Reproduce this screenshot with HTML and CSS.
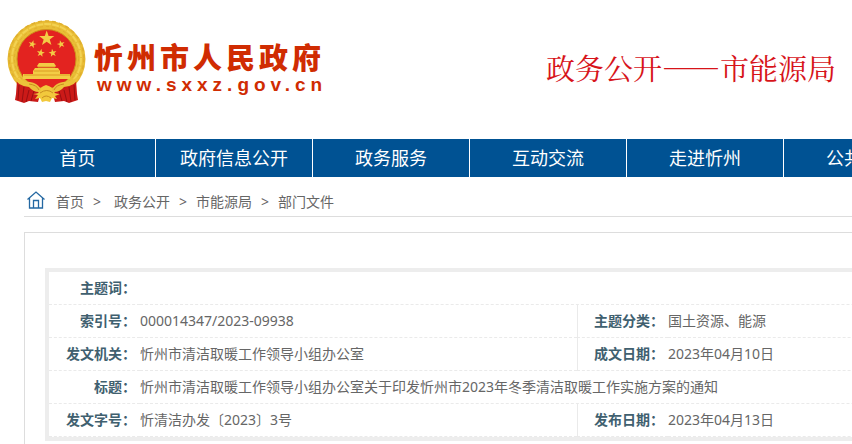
FILE: index.html
```html
<!DOCTYPE html>
<html lang="zh-CN">
  <head>
    <meta charset="utf-8" />
    <title>忻州市人民政府</title>
    <meta name="viewport" content="width=device-width, initial-scale=1" />
    <link rel="stylesheet" href="styles.css">
  </head>
  <body>
    <header class="header">
      <a class="logo" href="/">
        <svg class="emblem" viewBox="0 0 79 85" aria-hidden="true">
          <defs>
            <path id="star" d="M0-10 2.4-3.2 9.5-3.1 3.8 1.2 5.9 8.1 0 4-5.9 8.1-3.8 1.2-9.5-3.1-2.4-3.2z" />
          </defs>
          <ellipse cx="39.5" cy="39" rx="39" ry="38.5" fill="#e9bd36" />
          <circle cx="39.5" cy="38.5" r="37.5" fill="none" stroke="#dfae2c" stroke-width="1.5" stroke-dasharray="4 3" />
          <circle cx="39.5" cy="38.5" r="34.5" fill="none" stroke="#f3d252" stroke-width="2" stroke-dasharray="7 1" />
          <circle cx="39.5" cy="38.5" r="32" fill="none" stroke="#e0b02e" stroke-dasharray="3 3" />
          <circle cx="39.5" cy="39" r="29.5" fill="#e32320" stroke="#cf8f1c" />
          <g fill="#f3cc45">
            <use href="#star" transform="translate(39.7 18.5) scale(.8)" />
            <use href="#star" transform="translate(25.3 24.2) rotate(15) scale(.42)" />
            <use href="#star" transform="translate(54 24.2) rotate(-15) scale(.42)" />
            <use href="#star" transform="translate(33.7 33) rotate(10) scale(.42)" />
            <use href="#star" transform="translate(45.7 33) rotate(-10) scale(.42)" />
            <path d="M32 43h15l2 3-1 1H31l-1-1zM28 48h23l2 3H26zM26 51h27v3h10v5H16v-5h10z" />
          </g>
          <path d="M17 55h46M27 51h25M31 47h17" stroke="#dc9c24" />
          <path d="M10 60q9 6 18 6l5 9-2 7-9-1-5 2-9-3 1-6zM69 60q-9 6-18 6l-5 9 2 7 9-1 5 2 9-3-1-6z" fill="#cb1a18" />
          <path d="M12 65l-1 15M17 67l-2 15M22 70l-3 12M27 71l-3 10M67 65l1 15M62 67l2 15M57 70l3 12M52 71l3 10" stroke="#980f12" />
          <path d="M6 56q10 6 17 6 7 1 10 6l6 3 7-3q3-5 10-6 7 0 17-6-4 10-16 11-4 5-10 5l-8 2-7-2q-6 0-10-5-12-1-16-11z" fill="#ecc23a" />
          <path d="M26 74q5 0 8-3-2-4 5-6 8 2 6 6 3 3 8 3l-5 2 2 3-5-1-2 4-4-1-4 1-2-4-5 1 3-4z" fill="#f2c93c" />
          <path d="M33 73q7-5 13 0M35 78q4-4 9 0M22 64q8 1 10 6M57 64q-8 1-10 6" fill="none" stroke="#c98e20" />
        </svg>
        <span class="logo-text">
          <strong class="site-name">忻州市人民政府</strong>
          <span class="site-url">www.sxxz.gov.cn</span>
        </span>
      </a>
      <h1 class="dept">政务公开——市能源局</h1>
    </header>
    <nav class="nav">
      <ul>
        <li><a href="/">首页</a></li>
        <li><a href="/zfxxgk">政府信息公开</a></li>
        <li><a href="/zwfw">政务服务</a></li>
        <li><a href="/hdjl">互动交流</a></li>
        <li><a href="/zjxz">走进忻州</a></li>
        <li><a href="/ggfw">公共服务</a></li>
      </ul>
    </nav>
    <main class="main">
      <div class="crumbs">
        <svg class="home" viewBox="0 0 18 18" aria-hidden="true">
          <path d="M0.5 8.5 9 1l8.500 7.500M2.500 7v10h13V7M6.500 17V9.500h5V17" fill="none" stroke="#2468a2" stroke-width="1.3" />
        </svg>
        <a class="first" href="/">首页</a>
        <span>&gt;</span>
        <a class="section" href="/zwgk">政务公开</a>
        <span>&gt;</span>
        <a href="/zwgk/snyj">市能源局</a>
        <span>&gt;</span>
        <a href="/zwgk/snyj/bmwj">部门文件</a>
      </div>
      <div class="panel">
        <table class="info">
          <colgroup>
            <col class="col-label" />
            <col />
            <col class="col-label" />
            <col />
          </colgroup>
          <tr>
            <th scope="row">主题词：</th>
            <td colspan="3"></td>
          </tr>
          <tr>
            <th scope="row">索引号：</th>
            <td>000014347/2023-09938</td>
            <th scope="row" class="split">主题分类：</th>
            <td>国土资源、能源</td>
          </tr>
          <tr>
            <th scope="row">发文机关：</th>
            <td>忻州市清洁取暖工作领导小组办公室</td>
            <th scope="row" class="split">成文日期：</th>
            <td>2023年04月10日</td>
          </tr>
          <tr>
            <th scope="row">标题：</th>
            <td colspan="3">忻州市清洁取暖工作领导小组办公室关于印发忻州市2023年冬季清洁取暖工作实施方案的通知</td>
          </tr>
          <tr>
            <th scope="row">发文字号：</th>
            <td>忻清洁办发〔2023〕3号</td>
            <th scope="row" class="split">发布日期：</th>
            <td>2023年04月13日</td>
          </tr>
        </table>
      </div>
    </main>
  </body>
</html>
```

FILE: styles.css
```css
body {
  margin: 0;
  overflow: hidden;
  font-family: "Noto Sans", "Noto Sans CJK SC", sans-serif;
  font-size: 14px;
  color: #666;
  background: #fff;
}
a {
  color: inherit;
  text-decoration: none;
}
.header {
  display: flex;
  justify-content: space-between;
  align-items: center;
  padding: 20px 16px 34px 7px;
}
.logo {
  display: flex;
  align-items: center;
  gap: 8px;
  color: #d02c02;
}
.emblem {
  display: block;
  width: 79px;
  height: 85px;
}
.logo-text {
  display: flex;
  flex-direction: column;
  padding-top: 8px;
}
.site-name {
  font-family: "Noto Sans CJK SC", sans-serif;
  font-size: 29px;
  line-height: 36px;
  font-weight: 900;
  letter-spacing: 4px;
}
.site-url {
  padding-left: 3px;
  font-family: "Liberation Sans", Arial, sans-serif;
  font-size: 19px;
  line-height: 22px;
  font-weight: bold;
  letter-spacing: 5px;
}
.dept {
  margin: 0;
  padding-top: 10px;
  font-family: "Noto Serif CJK SC", "Liberation Serif", "Noto Sans CJK SC", serif;
  font-size: 29px;
  line-height: 36px;
  font-weight: normal;
  color: #d7141a;
}
.nav {
  background: #005293;
}
.nav ul {
  display: flex;
  margin: 0;
  padding: 0;
  list-style: none;
}
.nav li {
  box-sizing: border-box;
  flex: 0 0 157px;
  border-right: 1px solid #fff;
}
.nav li:first-child {
  flex-basis: 156px;
}
.nav a {
  display: block;
  font-size: 18px;
  line-height: 38px;
  text-align: center;
  color: #fff;
}
.main {
  min-width: 1106px;
  padding: 0 24px;
}
.crumbs {
  display: flex;
  align-items: center;
  gap: 9px;
  padding: 10px 0 0 3px;
  line-height: 29px;
  border-bottom: 1px solid #ddd;
}
.home {
  width: 18px;
  height: 18px;
  margin-bottom: 4px;
}
.crumbs .first {
  padding-left: 2px;
}
.crumbs .section {
  padding-left: 4px;
}
.panel {
  margin-top: 15px;
  padding: 35px 20px;
  border: 1px solid #ddd;
}
.info {
  width: 100%;
  table-layout: fixed;
  border: 4px solid #ededed;
  border-spacing: 0;
}
.col-label {
  width: 91px;
}
.info th,
.info td {
  height: 32px;
  padding: 0;
  line-height: 32px;
  border-bottom: 1px dashed #eaeaea;
}
.info th {
  padding-right: 4px;
  text-align: right;
  white-space: nowrap;
  color: #40606f;
}
.info .split {
  border-left: 1px solid #eaeaea;
}
```
